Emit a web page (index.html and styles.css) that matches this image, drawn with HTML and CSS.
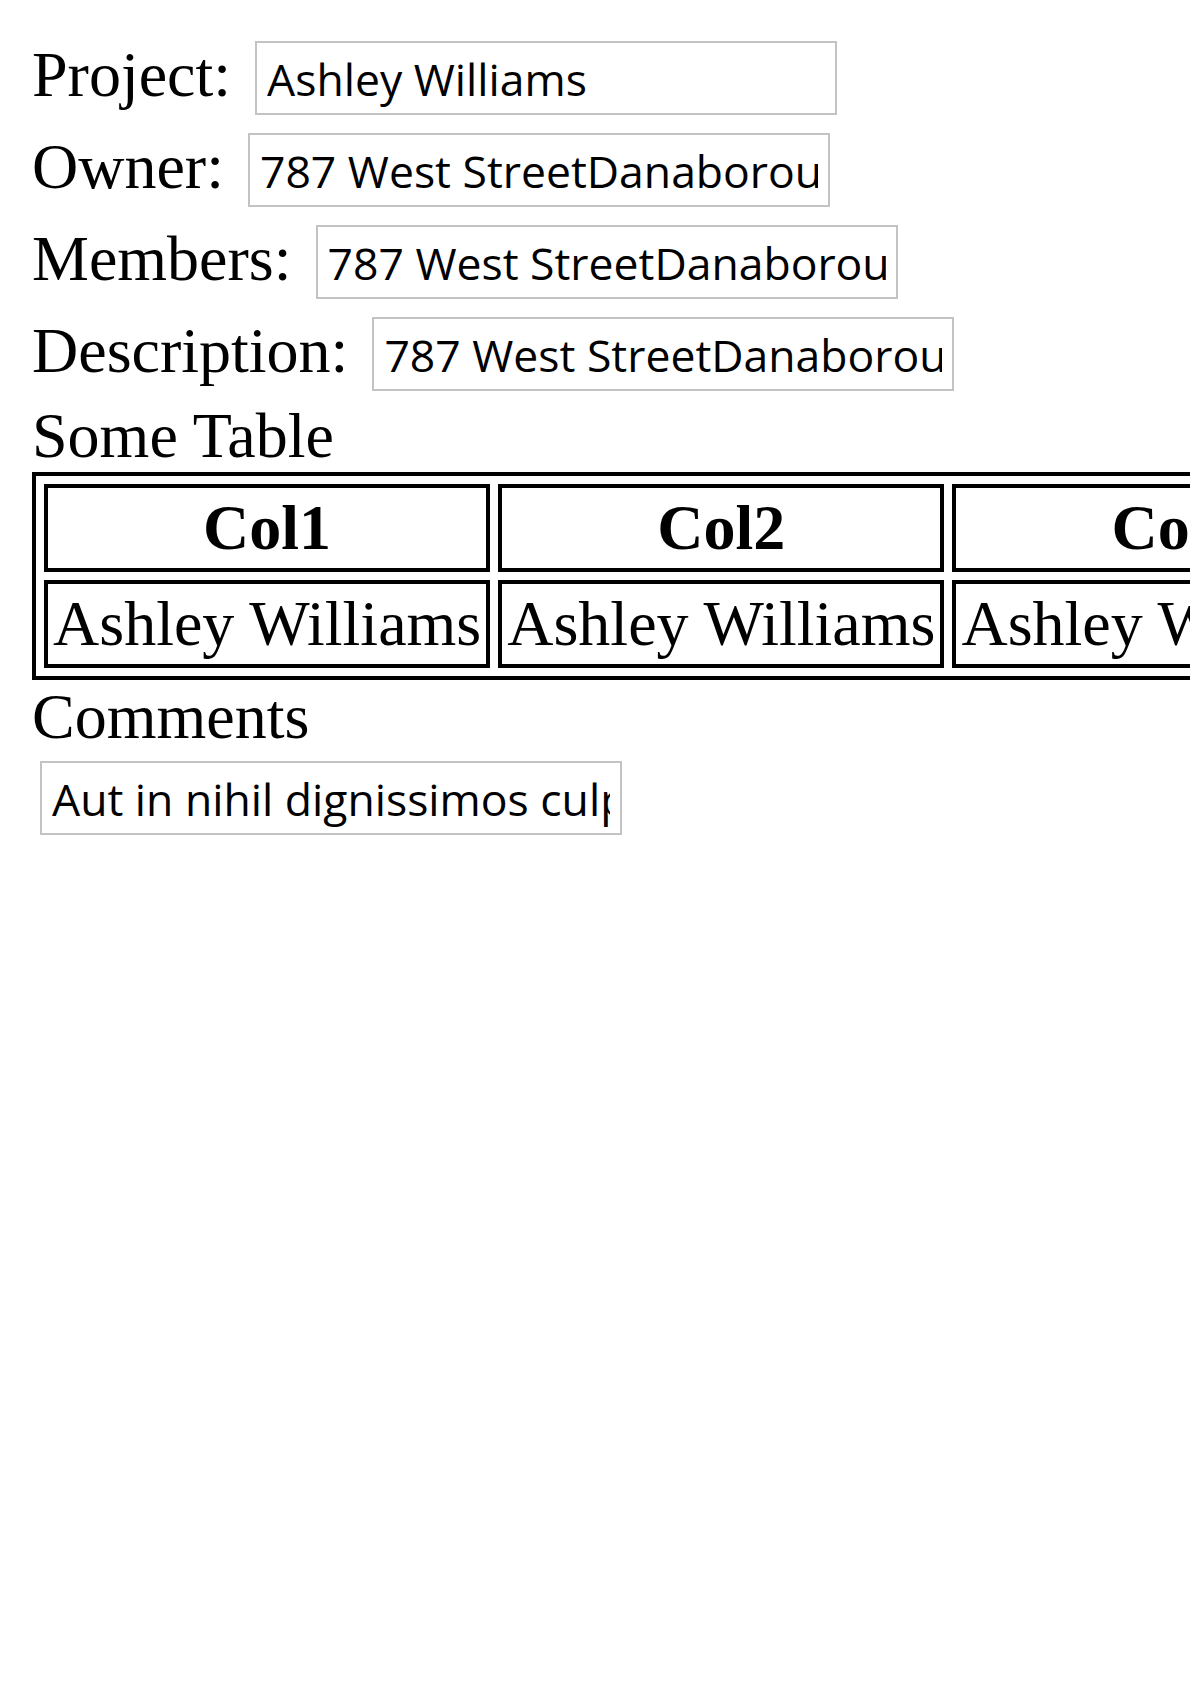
FILE: index.html
```html
<!DOCTYPE html>
<html lang="en">
<head>
<meta charset="utf-8">
<title>Project</title>
<link rel="stylesheet" href="styles.css">
</head>
<body>
<div class="form">
  <div class="field">
    <label class="label" for="project">Project:</label>
    <input class="text-input" id="project" type="text" value="Ashley Williams">
  </div>
  <div class="field">
    <label class="label" for="owner">Owner:</label>
    <input class="text-input" id="owner" type="text" value="787 West StreetDanaborough">
  </div>
  <div class="field">
    <label class="label" for="members">Members:</label>
    <input class="text-input" id="members" type="text" value="787 West StreetDanaborough">
  </div>
  <div class="field">
    <label class="label" for="description">Description:</label>
    <input class="text-input" id="description" type="text" value="787 West StreetDanaborough">
  </div>
  <div class="section-title table-title">Some Table</div>
  <div class="table-wrap">
    <table class="data-table">
      <thead>
        <tr><th>Col1</th><th>Col2</th><th>Col3</th></tr>
      </thead>
      <tbody>
        <tr><td>Ashley Williams</td><td>Ashley Williams</td><td>Ashley Williams</td></tr>
      </tbody>
    </table>
  </div>
  <div class="section-title comments-title">Comments</div>
  <div class="field comments-field">
    <input class="text-input" id="comments" type="text" value="Aut in nihil dignissimos culpa quia">
  </div>
</div>
</body>
</html>
```

FILE: styles.css
```css
html {
  background: #ffffff;
}

body {
  margin: 32px 0 0 32px;
  font-family: "Liberation Serif", "Times New Roman", serif;
  font-size: 64px;
  color: #000000;
}

.form {
  display: flex;
  flex-direction: column;
}

.field {
  display: flex;
  align-items: flex-start;
  column-gap: 16px;
  height: 92px;
}

.label {
  margin-top: 6px;
  line-height: 74px;
  white-space: nowrap;
}

.text-input {
  box-sizing: border-box;
  width: 582px;
  height: 74px;
  margin: 9px 0 9px 8px;
  padding: 0 10px;
  border: 2px solid #c3c3c3;
  border-radius: 0;
  background: #ffffff;
  color: #000000;
  font-family: "Open Sans", "Liberation Sans", Arial, sans-serif;
  font-size: 44.5px;
  line-height: normal;
  outline: none;
  flex: none;
}

.section-title {
  white-space: nowrap;
}

.table-title {
  line-height: 72px;
}

.comments-title {
  line-height: 73px;
}

.comments-field {
  height: auto;
}

.comments-field .text-input {
  margin-top: 8px;
}

.table-wrap {
  overflow: hidden;
}

.data-table {
  border: 4px solid #000000;
  border-collapse: separate;
  border-spacing: 8px;
  font-size: 64px;
}

.data-table th,
.data-table td {
  border: 4px solid #000000;
  padding: 3px 5px;
  line-height: normal;
  white-space: nowrap;
}

.data-table th {
  font-weight: bold;
  text-align: center;
}

.data-table td {
  text-align: left;
}
```
